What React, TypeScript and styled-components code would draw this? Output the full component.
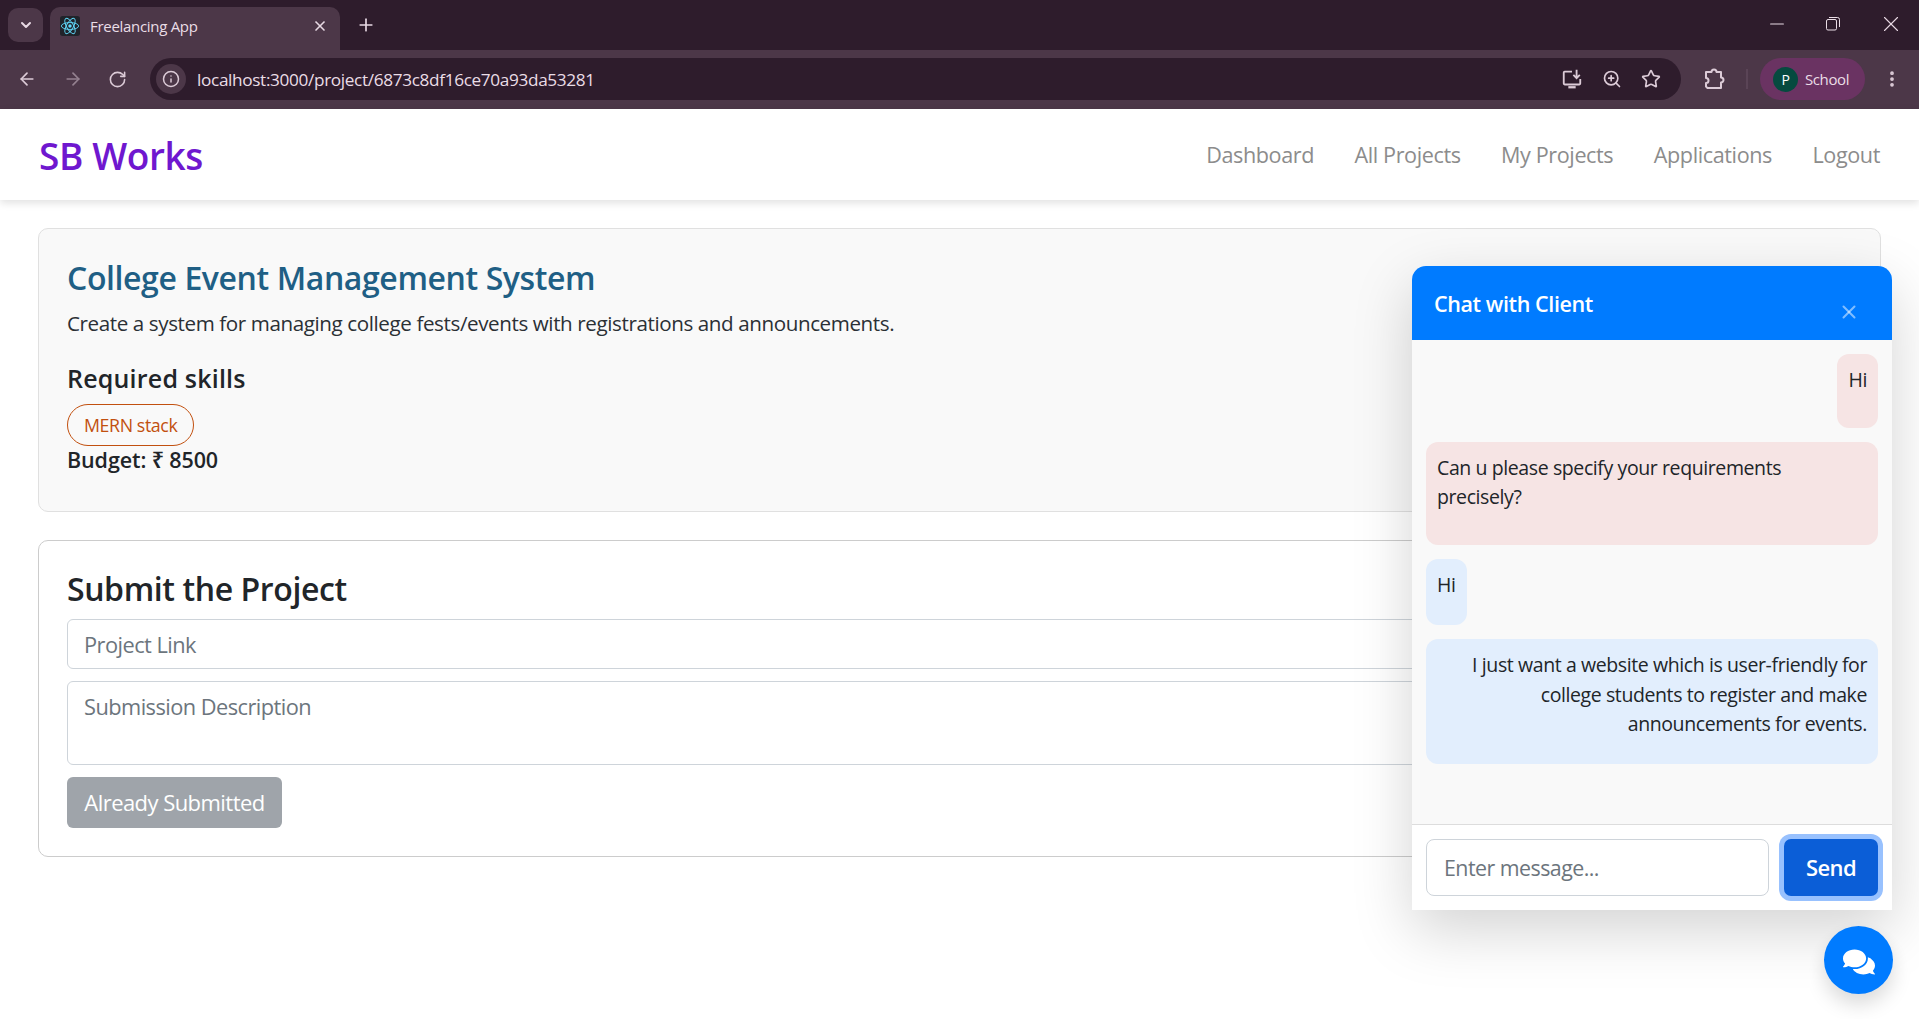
import React from 'react';
import styled, { createGlobalStyle } from 'styled-components';
import {
  ArrowLeft,
  ArrowRight,
  ChevronDown,
  EllipsisVertical,
  Info,
  Minus,
  Plus,
  RotateCw,
  Star,
  X,
  ZoomIn,
} from 'lucide-react';
import { FaComments } from 'react-icons/fa';

const GlobalStyle = createGlobalStyle`
  html, body {
    margin: 0;
    padding: 0;
    background: #fff;
    overflow: hidden;
  }
  body {
    font-family: "Open Sans", "Noto Sans", "DejaVu Sans", sans-serif;
    color: #212529;
    letter-spacing: -0.025em;
  }
  * {
    box-sizing: border-box;
  }
  input::placeholder, textarea::placeholder {
    color: #6c757d;
    opacity: 1;
  }
`;

const Page = styled.div`
  width: 1919px;
  height: 1019px;
  display: flex;
  flex-direction: column;
`;

/* browser chrome */
const TabStrip = styled.div`
  height: 50px;
  background: #2e1c2c;
  display: flex;
  align-items: flex-end;
  padding-left: 8px;
  color: #e8d9e4;
`;

const TabMenu = styled.div`
  width: 35px;
  height: 34px;
  margin-bottom: 8px;
  margin-right: 7px;
  border-radius: 10px;
  background: #4c3748;
  display: flex;
  align-items: center;
  justify-content: center;
`;

const Tab = styled.div`
  width: 290px;
  height: 43px;
  background: #4c3748;
  border-radius: 10px 10px 0 0;
  display: flex;
  align-items: center;
  padding: 0 12px 6px 10px;
  gap: 10px;
`;

const TabTitle = styled.span`
  flex: 1;
  font-size: 15px;
  letter-spacing: -0.02em;
  color: #eadde6;
`;

const NewTab = styled.div`
  width: 52px;
  height: 42px;
  display: flex;
  align-items: center;
  justify-content: center;
  margin-bottom: 4px;
`;

const WindowControls = styled.div`
  margin-left: auto;
  height: 100%;
  display: flex;
  align-items: center;
  gap: 38px;
  padding: 0 15px 2px 0;
`;

const Toolbar = styled.div`
  height: 59px;
  background: #4c3748;
  display: flex;
  align-items: center;
  padding: 0 17px 1px 17px;
  color: #dccbd7;
  & > * {
    flex-shrink: 0;
  }
`;

const NavIcons = styled.div`
  width: 133px;
  display: flex;
  gap: 25.5px;
  align-items: center;
`;

const Omnibox = styled.div`
  width: 1531px;
  height: 42px;
  border-radius: 21px;
  background: #2e1c2c;
  display: flex;
  align-items: center;
  padding: 0 20px 0 6px;
`;

const SiteInfo = styled.div`
  width: 30px;
  height: 30px;
  border-radius: 50%;
  background: #4c3748;
  display: flex;
  align-items: center;
  justify-content: center;
  margin-right: 11px;
`;

const Url = styled.span`
  flex: 1;
  font-size: 17.2px;
  letter-spacing: -0.02em;
  color: #eadde6;
`;

const OmniIcons = styled.div`
  display: flex;
  align-items: center;
  gap: 19px;
`;

const Extension = styled.div`
  width: 45px;
  display: flex;
  justify-content: flex-end;
`;

const ToolbarDivider = styled.div`
  width: 2px;
  height: 20px;
  background: #68526380;
  margin: 0 12px 0 20px;
`;

const Profile = styled.div`
  width: 105px;
  height: 42px;
  border-radius: 21px;
  background: #6a3362;
  display: flex;
  align-items: center;
  padding-left: 13px;
  gap: 7px;
`;

const Avatar = styled.div`
  width: 25px;
  height: 25px;
  border-radius: 50%;
  background: #054a3f;
  color: #fff;
  font-size: 14px;
  display: flex;
  align-items: center;
  justify-content: center;
`;

const ProfileName = styled.span`
  font-size: 15px;
  color: #eadde6;
`;

const Kebab = styled.div`
  margin-left: 17px;
  display: flex;
`;

/* navbar */
const NavBar = styled.nav`
  height: 91px;
  flex-shrink: 0;
  background: #fff;
  box-shadow: 0 3px 8px rgba(0, 0, 0, 0.12);
  display: flex;
  align-items: center;
  justify-content: space-between;
  padding: 0 39px 0 39px;
`;

const Brand = styled.div`
  padding-top: 2px;
  font-size: 37px;
  font-weight: 600;
  color: #6f17cf;
`;

const NavLinks = styled.div`
  display: flex;
  gap: 40.5px;
`;

const NavLink = styled.a`
  font-size: 21.6px;
  color: #8c8c8c;
`;

/* page content */
const Main = styled.main`
  padding: 28px 38px;
  display: flex;
  flex-direction: column;
  gap: 28px;
`;

const Card = styled.section<{ $tinted?: boolean }>`
  border: 1px solid ${p => (p.$tinted ? '#e0e0e0' : '#cccccc')};
  border-radius: 10px;
  padding: 28px 28px 28px;
  background: ${p => (p.$tinted ? '#f9f9f9' : '#fff')};
`;

const ProjectTitle = styled.h3`
  margin: 0 0 10px;
  font-size: 32px;
  line-height: 41px;
  font-weight: 600;
  color: #1f5f85;
`;

const Description = styled.p`
  margin: 0 0 25px;
  font-size: 20.6px;
  line-height: 30px;
  color: #2b3035;
`;

const SkillsHeading = styled.h5`
  margin: 0 0 11px;
  font-size: 25px;
  line-height: 30px;
  font-weight: 600;
  letter-spacing: 0.008em;
`;

const SkillBadge = styled.span`
  display: inline-flex;
  align-items: center;
  height: 42px;
  padding: 0 16px;
  border: 1px solid #c2500f;
  border-radius: 21px;
  font-size: 17.8px;
  color: #c2500f;
`;

const Budget = styled.div`
  margin-bottom: 10px;
  font-size: 21.5px;
  line-height: 27px;
  font-weight: 600;
  letter-spacing: -0.005em;
`;

const SubmitHeading = styled.h3`
  margin: 0 0 11px;
  font-size: 32px;
  line-height: 39px;
  font-weight: 600;
`;

const FieldStyles = `
  display: block;
  width: 100%;
  border: 1px solid #ced4da;
  border-radius: 6px;
  padding: 0 16px;
  font: inherit;
  font-size: 21.8px;
  letter-spacing: -0.025em;
  color: #212529;
  background: #fff;
  outline: none;
`;

const TextField = styled.input`
  ${FieldStyles}
  height: 50px;
  margin-bottom: 12px;
`;

const TextArea = styled.textarea`
  ${FieldStyles}
  height: 84px;
  padding-top: 10px;
  margin-bottom: 12px;
  resize: none;
`;

const SubmittedButton = styled.button`
  width: 215px;
  height: 51px;
  display: block;
  border: none;
  border-radius: 6px;
  padding: 0 0 2px;
  background: #6c757d;
  opacity: 0.65;
  color: #fff;
  font: inherit;
  font-size: 22px;
  letter-spacing: -0.025em;
`;

/* chat widget */
const ChatPanel = styled.aside`
  position: fixed;
  top: 266px;
  right: 27px;
  width: 480px;
  height: 644px;
  display: flex;
  flex-direction: column;
  border-radius: 14px 14px 0 0;
  background: #fff;
  box-shadow: 0 20px 60px rgba(0, 0, 0, 0.175);
`;

const ChatHeader = styled.header`
  height: 74px;
  flex-shrink: 0;
  background: #007bff;
  border-radius: 14px 14px 0 0;
  display: flex;
  align-items: center;
  justify-content: space-between;
  padding: 1px 32px 0 22px;
  color: #fff;
`;

const ChatTitle = styled.span`
  font-size: 21.5px;
  font-weight: 600;
`;

const CloseButton = styled.span`
  display: flex;
  margin-top: 16px;
  color: rgba(255, 255, 255, 0.5);
`;

const MessageList = styled.div`
  flex: 1;
  background: #f9f9f9;
  border-bottom: 1px solid #ddd;
  padding: 14px 14px 0;
  display: flex;
  flex-direction: column;
  gap: 14px;
`;

const Bubble = styled.div<{ $mine?: boolean; $end?: boolean; $right?: boolean }>`
  align-self: ${p => (p.$end ? 'flex-end' : p.$right || p.$mine ? 'stretch' : 'flex-start')};
  background: ${p => (p.$mine ? '#f6e4e4' : '#e2eefd')};
  border-radius: 12px;
  padding: 11px 11px ${p => (p.$mine ? '33px' : '25px')};
  font-size: 19.5px;
  line-height: 29.7px;
  text-align: ${p => (p.$right ? 'right' : 'left')};
`;

const ChatForm = styled.div`
  height: 85px;
  flex-shrink: 0;
  display: flex;
  gap: 15px;
  padding: 14px;
  background: #fff;
`;

const ChatInput = styled.input`
  ${FieldStyles}
  flex: 1;
  min-width: 0;
  height: 57px;
  border-radius: 8px;
  padding: 0 17px;
  font-size: 21.4px;
`;

const SendButton = styled.button`
  width: 94px;
  height: 57px;
  border: none;
  border-radius: 7px;
  padding: 0 0 1px;
  background: #0b5ed7;
  box-shadow: 0 0 0 5px #98c1fe;
  color: #fff;
  font: inherit;
  font-size: 22px;
  font-weight: 600;
  letter-spacing: -0.025em;
`;

const ChatFab = styled.button`
  position: fixed;
  top: 926px;
  left: 1824px;
  width: 69px;
  height: 68px;
  border: none;
  border-radius: 50%;
  background: #007bff;
  box-shadow: 0 10px 20px rgba(0, 0, 0, 0.15);
  color: #fff;
  display: flex;
  align-items: center;
  justify-content: center;
  padding: 4px 0 0;
`;

const ReactFavicon = () => (
  <svg width="20" height="20" viewBox="0 0 22 22">
    <rect width="22" height="22" rx="3" fill="#20232a" />
    <g fill="none" stroke="#61dafb" strokeWidth="1">
      <ellipse cx="11" cy="11" rx="9.5" ry="3.8" />
      <ellipse cx="11" cy="11" rx="9.5" ry="3.8" transform="rotate(60 11 11)" />
      <ellipse cx="11" cy="11" rx="9.5" ry="3.8" transform="rotate(120 11 11)" />
    </g>
    <circle cx="11" cy="11" r="1.9" fill="#61dafb" />
  </svg>
);

const RestoreIcon = () => (
  <svg width="14" height="14" viewBox="0 0 14 14" fill="none" stroke="#eadde6" strokeWidth="1">
    <rect x="0.5" y="2.5" width="10" height="10.5" rx="1.5" />
    <path d="M3 0.5h8.5a2 2 0 0 1 2 2V10" />
  </svg>
);

const InstallIcon = () => (
  <svg width="22" height="22" viewBox="0 0 24 24" fill="none" stroke="currentColor" strokeWidth="2">
    <path d="M12 4H4a1 1 0 0 0-1 1v12a1 1 0 0 0 1 1h16a1 1 0 0 0 1-1v-5" />
    <path d="M8 21h8" strokeWidth="2.5" />
    <path d="M17 2v9M13.5 7.5l3.5 3.5 3.5-3.5" />
  </svg>
);

const ExtensionIcon = () => (
  <svg width="24" height="24" viewBox="0 0 24 24" fill="none" stroke="currentColor" strokeWidth="2" strokeLinejoin="round">
    <path d="M4 5h5.5a2.5 2.5 0 0 1 5 0H19v5.5a2.5 2.5 0 0 1 0 5V21H5.5L4 19.5V16a2.5 2.5 0 0 0 0-5z" />
  </svg>
);

const App = () => (
  <Page>
    <GlobalStyle />
    <TabStrip>
      <TabMenu>
        <ChevronDown size={16} strokeWidth={3} />
      </TabMenu>
      <Tab>
        <ReactFavicon />
        <TabTitle>Freelancing App</TabTitle>
        <X size={16} strokeWidth={2.5} />
      </Tab>
      <NewTab>
        <Plus size={20} strokeWidth={2} />
      </NewTab>
      <WindowControls>
        <Minus size={22} strokeWidth={1.1} />
        <RestoreIcon />
        <X size={26} strokeWidth={1} />
      </WindowControls>
    </TabStrip>
    <Toolbar>
      <NavIcons>
        <ArrowLeft size={20} strokeWidth={2} />
        <ArrowRight size={20} strokeWidth={2} opacity={0.5} />
        <RotateCw size={19} strokeWidth={2} />
      </NavIcons>
      <Omnibox>
        <SiteInfo>
          <Info size={18} strokeWidth={2} />
        </SiteInfo>
        <Url>localhost:3000/project/6873c8df16ce70a93da53281</Url>
        <OmniIcons>
          <InstallIcon />
          <ZoomIn size={20} strokeWidth={2} />
          <Star size={20} strokeWidth={2} />
        </OmniIcons>
      </Omnibox>
      <Extension>
        <ExtensionIcon />
      </Extension>
      <ToolbarDivider />
      <Profile>
        <Avatar>P</Avatar>
        <ProfileName>School</ProfileName>
      </Profile>
      <Kebab>
        <EllipsisVertical size={20} strokeWidth={2.5} />
      </Kebab>
    </Toolbar>
    <NavBar>
      <Brand>SB Works</Brand>
      <NavLinks>
        <NavLink>Dashboard</NavLink>
        <NavLink>All Projects</NavLink>
        <NavLink>My Projects</NavLink>
        <NavLink>Applications</NavLink>
        <NavLink>Logout</NavLink>
      </NavLinks>
    </NavBar>
    <Main>
      <Card $tinted>
        <ProjectTitle>College Event Management System</ProjectTitle>
        <Description>Create a system for managing college fests/events with registrations and announcements.</Description>
        <SkillsHeading>Required skills</SkillsHeading>
        <SkillBadge>MERN stack</SkillBadge>
        <Budget>Budget: ₹ 8500</Budget>
      </Card>
      <Card>
        <SubmitHeading>Submit the Project</SubmitHeading>
        <TextField placeholder="Project Link" />
        <TextArea placeholder="Submission Description" />
        <SubmittedButton disabled>Already Submitted</SubmittedButton>
      </Card>
    </Main>
    <ChatPanel>
      <ChatHeader>
        <ChatTitle>Chat with Client</ChatTitle>
        <CloseButton>
          <X size={22} strokeWidth={2.2} />
        </CloseButton>
      </ChatHeader>
      <MessageList>
        <Bubble $mine $end>Hi</Bubble>
        <Bubble $mine>Can u please specify your requirements precisely?</Bubble>
        <Bubble>Hi</Bubble>
        <Bubble $right>I just want a website which is user-friendly for college students to register and make announcements for events.</Bubble>
      </MessageList>
      <ChatForm>
        <ChatInput placeholder="Enter message..." />
        <SendButton>Send</SendButton>
      </ChatForm>
    </ChatPanel>
    <ChatFab>
      <FaComments size={32} />
    </ChatFab>
  </Page>
);

export default App;
